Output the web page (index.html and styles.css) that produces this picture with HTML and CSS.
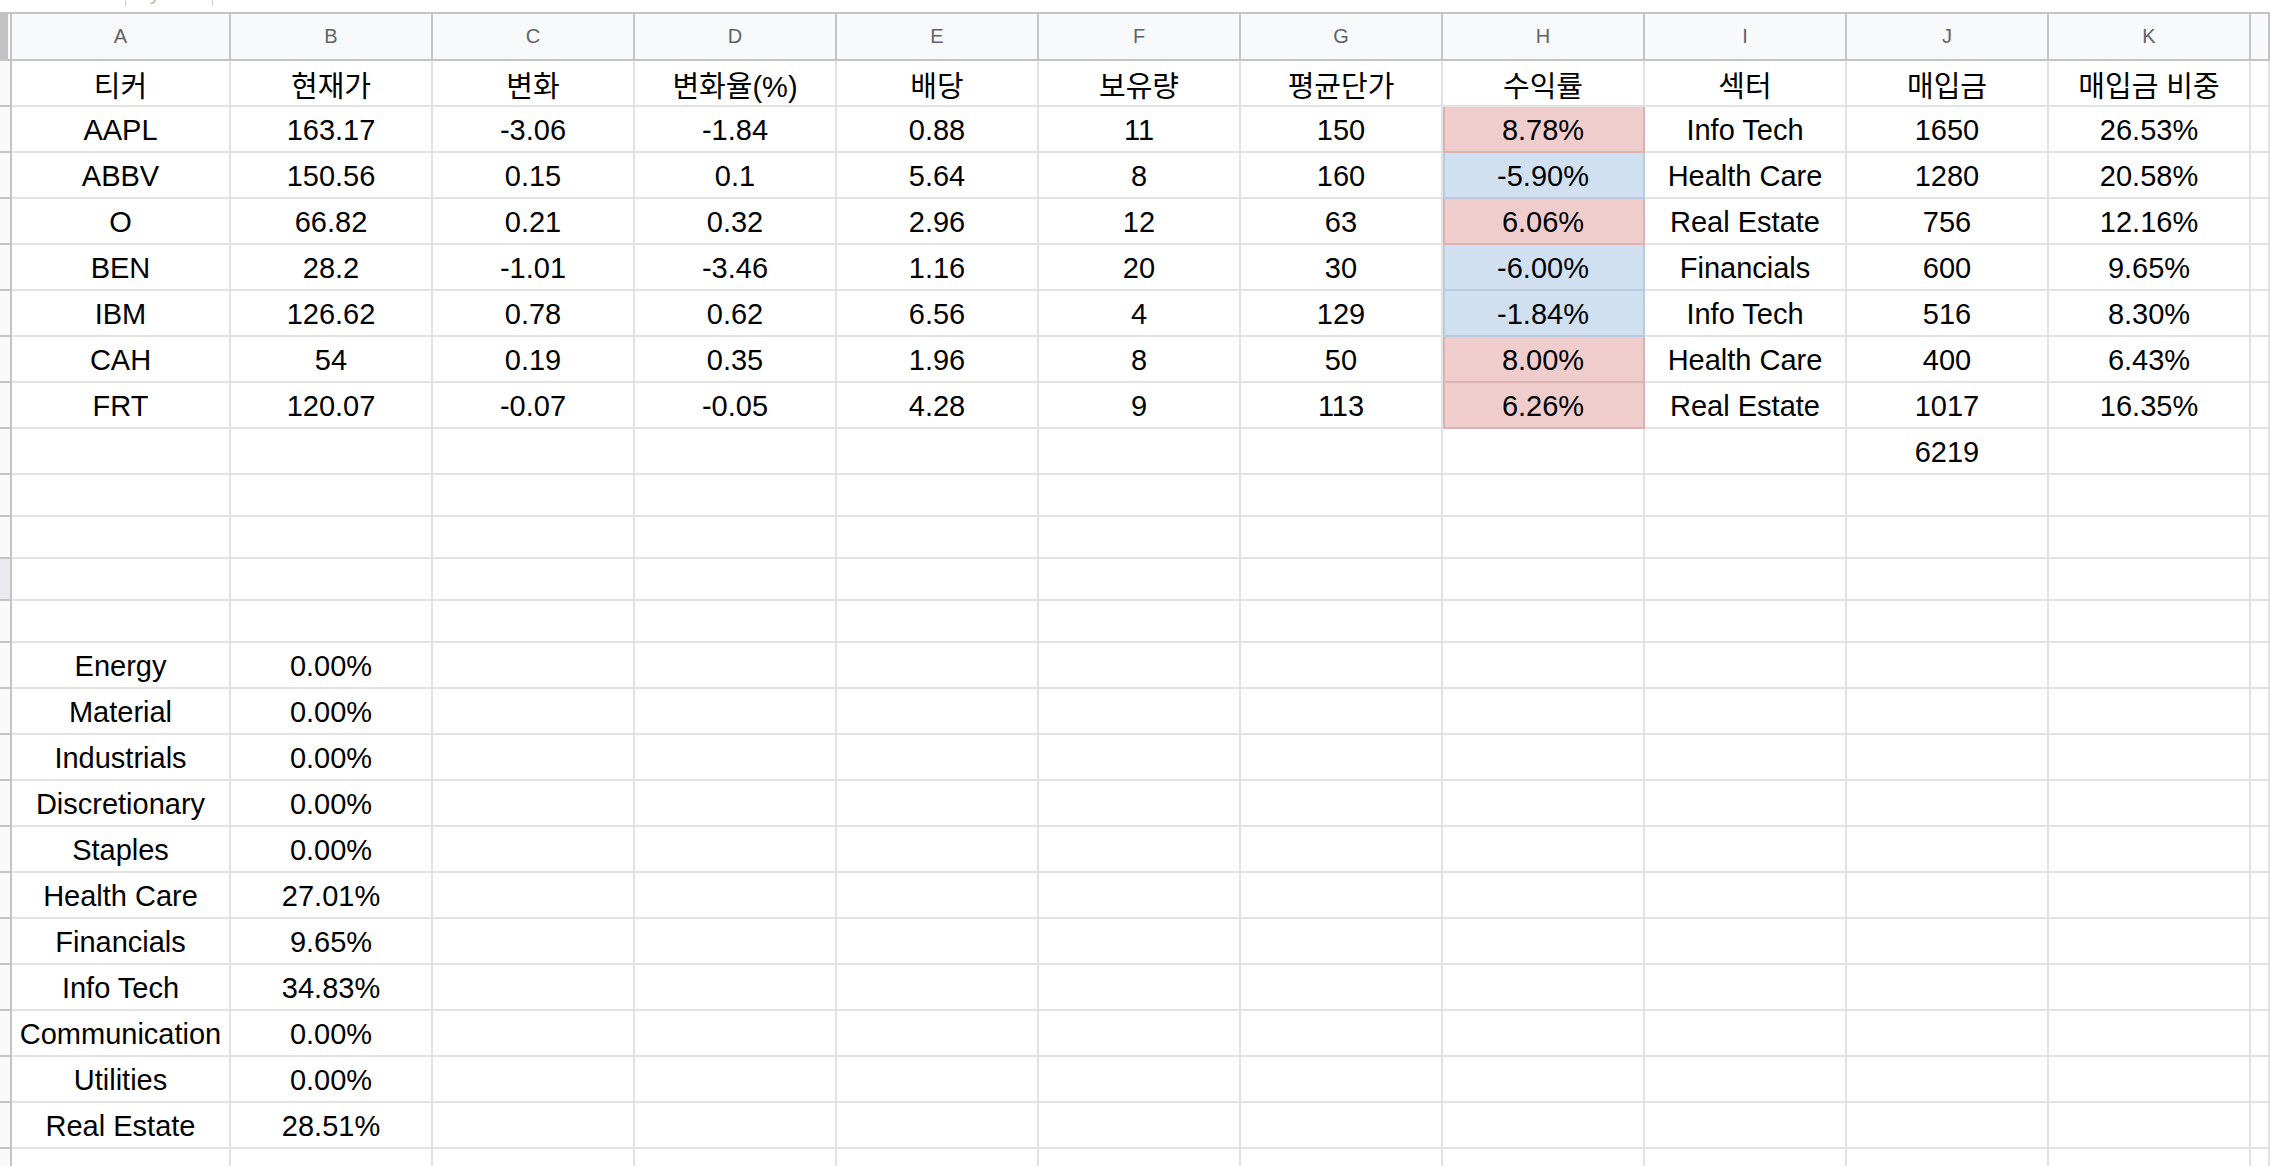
FILE: index.html
```html
<!DOCTYPE html>
<html lang="ko">
<head>
<meta charset="utf-8">
<title>Sheet</title>
<link rel="stylesheet" href="styles.css">
</head>
<body>
<div class="toolbar"><span class="tb-sep tb-sep1"></span><span class="tb-glyph">y</span><span class="tb-sep tb-sep2"></span></div>
<div class="sheet">
  <div class="r colhead"><div class="h corner"></div><div class="c">A</div><div class="c">B</div><div class="c">C</div><div class="c">D</div><div class="c">E</div><div class="c">F</div><div class="c">G</div><div class="c">H</div><div class="c">I</div><div class="c">J</div><div class="c">K</div><div class="c"></div></div>
  <div class="r"><div class="h"></div><div class="c">티커</div><div class="c">현재가</div><div class="c">변화</div><div class="c">변화율(%)</div><div class="c">배당</div><div class="c">보유량</div><div class="c">평균단가</div><div class="c">수익률</div><div class="c">섹터</div><div class="c">매입금</div><div class="c">매입금 비중</div><div class="c"></div></div>
  <div class="r"><div class="h"></div><div class="c">AAPL</div><div class="c">163.17</div><div class="c">-3.06</div><div class="c">-1.84</div><div class="c">0.88</div><div class="c">11</div><div class="c">150</div><div class="c pos">8.78%</div><div class="c">Info Tech</div><div class="c">1650</div><div class="c">26.53%</div><div class="c"></div></div>
  <div class="r"><div class="h"></div><div class="c">ABBV</div><div class="c">150.56</div><div class="c">0.15</div><div class="c">0.1</div><div class="c">5.64</div><div class="c">8</div><div class="c">160</div><div class="c neg">-5.90%</div><div class="c">Health Care</div><div class="c">1280</div><div class="c">20.58%</div><div class="c"></div></div>
  <div class="r"><div class="h"></div><div class="c">O</div><div class="c">66.82</div><div class="c">0.21</div><div class="c">0.32</div><div class="c">2.96</div><div class="c">12</div><div class="c">63</div><div class="c pos">6.06%</div><div class="c">Real Estate</div><div class="c">756</div><div class="c">12.16%</div><div class="c"></div></div>
  <div class="r"><div class="h"></div><div class="c">BEN</div><div class="c">28.2</div><div class="c">-1.01</div><div class="c">-3.46</div><div class="c">1.16</div><div class="c">20</div><div class="c">30</div><div class="c neg">-6.00%</div><div class="c">Financials</div><div class="c">600</div><div class="c">9.65%</div><div class="c"></div></div>
  <div class="r"><div class="h"></div><div class="c">IBM</div><div class="c">126.62</div><div class="c">0.78</div><div class="c">0.62</div><div class="c">6.56</div><div class="c">4</div><div class="c">129</div><div class="c neg">-1.84%</div><div class="c">Info Tech</div><div class="c">516</div><div class="c">8.30%</div><div class="c"></div></div>
  <div class="r"><div class="h"></div><div class="c">CAH</div><div class="c">54</div><div class="c">0.19</div><div class="c">0.35</div><div class="c">1.96</div><div class="c">8</div><div class="c">50</div><div class="c pos">8.00%</div><div class="c">Health Care</div><div class="c">400</div><div class="c">6.43%</div><div class="c"></div></div>
  <div class="r"><div class="h"></div><div class="c">FRT</div><div class="c">120.07</div><div class="c">-0.07</div><div class="c">-0.05</div><div class="c">4.28</div><div class="c">9</div><div class="c">113</div><div class="c pos">6.26%</div><div class="c">Real Estate</div><div class="c">1017</div><div class="c">16.35%</div><div class="c"></div></div>
  <div class="r"><div class="h"></div><div class="c"></div><div class="c"></div><div class="c"></div><div class="c"></div><div class="c"></div><div class="c"></div><div class="c"></div><div class="c"></div><div class="c"></div><div class="c">6219</div><div class="c"></div><div class="c"></div></div>
  <div class="r short"><div class="h"></div><div class="c"></div><div class="c"></div><div class="c"></div><div class="c"></div><div class="c"></div><div class="c"></div><div class="c"></div><div class="c"></div><div class="c"></div><div class="c"></div><div class="c"></div><div class="c"></div></div>
  <div class="r short"><div class="h"></div><div class="c"></div><div class="c"></div><div class="c"></div><div class="c"></div><div class="c"></div><div class="c"></div><div class="c"></div><div class="c"></div><div class="c"></div><div class="c"></div><div class="c"></div><div class="c"></div></div>
  <div class="r short"><div class="h sel"></div><div class="c"></div><div class="c"></div><div class="c"></div><div class="c"></div><div class="c"></div><div class="c"></div><div class="c"></div><div class="c"></div><div class="c"></div><div class="c"></div><div class="c"></div><div class="c"></div></div>
  <div class="r short"><div class="h"></div><div class="c"></div><div class="c"></div><div class="c"></div><div class="c"></div><div class="c"></div><div class="c"></div><div class="c"></div><div class="c"></div><div class="c"></div><div class="c"></div><div class="c"></div><div class="c"></div></div>
  <div class="r"><div class="h"></div><div class="c">Energy</div><div class="c">0.00%</div><div class="c"></div><div class="c"></div><div class="c"></div><div class="c"></div><div class="c"></div><div class="c"></div><div class="c"></div><div class="c"></div><div class="c"></div><div class="c"></div></div>
  <div class="r"><div class="h"></div><div class="c">Material</div><div class="c">0.00%</div><div class="c"></div><div class="c"></div><div class="c"></div><div class="c"></div><div class="c"></div><div class="c"></div><div class="c"></div><div class="c"></div><div class="c"></div><div class="c"></div></div>
  <div class="r"><div class="h"></div><div class="c">Industrials</div><div class="c">0.00%</div><div class="c"></div><div class="c"></div><div class="c"></div><div class="c"></div><div class="c"></div><div class="c"></div><div class="c"></div><div class="c"></div><div class="c"></div><div class="c"></div></div>
  <div class="r"><div class="h"></div><div class="c">Discretionary</div><div class="c">0.00%</div><div class="c"></div><div class="c"></div><div class="c"></div><div class="c"></div><div class="c"></div><div class="c"></div><div class="c"></div><div class="c"></div><div class="c"></div><div class="c"></div></div>
  <div class="r"><div class="h"></div><div class="c">Staples</div><div class="c">0.00%</div><div class="c"></div><div class="c"></div><div class="c"></div><div class="c"></div><div class="c"></div><div class="c"></div><div class="c"></div><div class="c"></div><div class="c"></div><div class="c"></div></div>
  <div class="r"><div class="h"></div><div class="c">Health Care</div><div class="c">27.01%</div><div class="c"></div><div class="c"></div><div class="c"></div><div class="c"></div><div class="c"></div><div class="c"></div><div class="c"></div><div class="c"></div><div class="c"></div><div class="c"></div></div>
  <div class="r"><div class="h"></div><div class="c">Financials</div><div class="c">9.65%</div><div class="c"></div><div class="c"></div><div class="c"></div><div class="c"></div><div class="c"></div><div class="c"></div><div class="c"></div><div class="c"></div><div class="c"></div><div class="c"></div></div>
  <div class="r"><div class="h"></div><div class="c">Info Tech</div><div class="c">34.83%</div><div class="c"></div><div class="c"></div><div class="c"></div><div class="c"></div><div class="c"></div><div class="c"></div><div class="c"></div><div class="c"></div><div class="c"></div><div class="c"></div></div>
  <div class="r"><div class="h"></div><div class="c">Communication</div><div class="c">0.00%</div><div class="c"></div><div class="c"></div><div class="c"></div><div class="c"></div><div class="c"></div><div class="c"></div><div class="c"></div><div class="c"></div><div class="c"></div><div class="c"></div></div>
  <div class="r"><div class="h"></div><div class="c">Utilities</div><div class="c">0.00%</div><div class="c"></div><div class="c"></div><div class="c"></div><div class="c"></div><div class="c"></div><div class="c"></div><div class="c"></div><div class="c"></div><div class="c"></div><div class="c"></div></div>
  <div class="r"><div class="h"></div><div class="c">Real Estate</div><div class="c">28.51%</div><div class="c"></div><div class="c"></div><div class="c"></div><div class="c"></div><div class="c"></div><div class="c"></div><div class="c"></div><div class="c"></div><div class="c"></div><div class="c"></div></div>
  <div class="r"><div class="h"></div><div class="c"></div><div class="c"></div><div class="c"></div><div class="c"></div><div class="c"></div><div class="c"></div><div class="c"></div><div class="c"></div><div class="c"></div><div class="c"></div><div class="c"></div><div class="c"></div></div>
</div>
</body>
</html>
```
FILE: styles.css
```css
html, body {
  margin: 0;
  padding: 0;
  background: #ffffff;
  overflow: hidden;
}
body {
  font-family: "Liberation Sans", Arial, "Noto Sans CJK KR", sans-serif;
  color: #000;
}
.toolbar {
  height: 12px;
  display: flex;
  align-items: flex-start;
  overflow: hidden;
}
.tb-sep {
  width: 1px;
  height: 6px;
  background: #cfcfcf;
  flex: none;
}
.tb-sep1 { margin-left: 125px; }
.tb-glyph {
  margin-left: 24px;
  margin-top: -19px;
  font-size: 20px;
  line-height: 24px;
  color: #b5b5b5;
  width: 10px;
  flex: none;
}
.tb-sep2 { margin-left: 52px; }

.sheet {
  display: flex;
  flex-direction: column;
}
.r {
  display: grid;
  grid-template-columns: 12px 219px repeat(10, 202px) 1fr;
  height: 46px;
}
.r.short { height: 42px; }
.r.colhead {
  height: 49px;
  background: #f8f9fa;
  border-top: 2px solid #c4c4c4;
  box-sizing: border-box;
}
.c, .h {
  box-sizing: border-box;
  border-right: 2px solid #e2e2e2;
  border-bottom: 2px solid #e2e2e2;
  display: flex;
  align-items: center;
  justify-content: center;
  font-size: 29px;
  padding-top: 2px;
  white-space: nowrap;
  overflow: hidden;
}
.h {
  background: #f8f9fa;
  border-right-color: #c4c4c4;
  border-bottom-color: #c4c4c4;
}
.h.sel { background: #e8eaed; }
.colhead .c {
  font-size: 20px;
  padding-top: 0;
  color: #5f6368;
  border-right-color: #c4c4c4;
  border-bottom-color: #c4c4c4;
}
.corner {
  background: linear-gradient(to right, #c2c2c2 0 8px, #f8f9fa 8px);
}
.pos {
  background: #efcdcd;
  border-right-color: #dbb3b3;
  border-bottom-color: #dbb3b3;
  box-shadow: inset 2px 0 0 #dbb3b3;
}
.neg {
  background: #d0e0f0;
  border-right-color: #b8cbe0;
  border-bottom-color: #b8cbe0;
  box-shadow: inset 2px 0 0 #b8cbe0;
}
```
